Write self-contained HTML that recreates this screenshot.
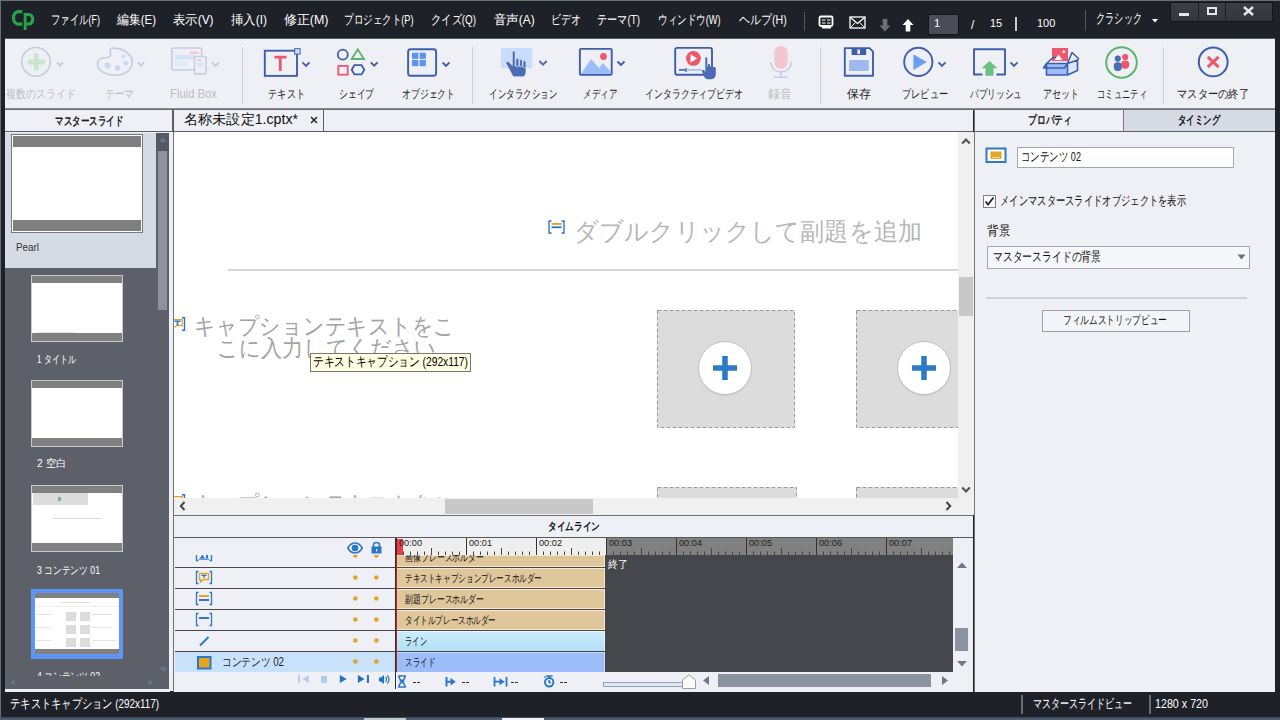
<!DOCTYPE html>
<html><head><meta charset="utf-8">
<style>
*{margin:0;padding:0;box-sizing:border-box}
html,body{width:1280px;height:720px;overflow:hidden;background:#1f2128;font-family:"Liberation Sans",sans-serif;font-size:12px;color:#222}
.a{position:absolute}
.t{position:absolute;white-space:nowrap;line-height:1}
/* title bar */
#title{left:0;top:0;width:1280px;height:38px;background:#1f2128;border-top:1px solid #6b6e75;border-left:1px solid #6b6e75}
.menu{color:#fff;font-size:12.5px;top:13px}
/* toolbar */
#tb{left:5px;top:38px;width:1270px;height:71px;background:#eff0f5;border-top:1px solid #5a5c63;border-bottom:1px solid #8a8c92}
.lbl{font-size:12px;color:#222;top:50px;text-align:center}
.dis{color:#b9bcc4}
.sep{position:absolute;top:8px;width:1px;height:57px;background:#cfd1d8}
/* left panel */
#lp{left:5px;top:109px;width:165px;height:581px;background:#5d6069}
.phdr{background:#eef0f6;border-bottom:1px solid #5c5e64;height:22px;font-size:12px;font-weight:bold;text-align:center;line-height:22px}
/* canvas */
#cv{left:174px;top:109px;width:799px;height:407px;background:#fff}
/* timeline */
#tl{left:174px;top:515px;width:799px;height:177px;background:#eff0f5;border-top:1px solid #707278}
/* right panel */
#rp{left:975px;top:109px;width:300px;height:583px;background:#eff0f5}
/* status */
#sb{left:0;top:692px;width:1280px;height:28px;background:#1f2128}
</style></head>
<body>
<div id="title" class="a">
<svg class="a" style="left:0;top:-0.7px" width="40" height="36" viewBox="0 0 40 36"><path d="M21.25 10H17.5A6.7 7.9 0 0 0 17.5 25.8H21.25V22.6H17.6A3.6 4.7 0 0 1 17.6 13.2H21.25Z" fill="#27a24d"/><rect x="22.7" y="12.9" width="2.9" height="17.1" fill="#27a24d"/><path d="M24 12.9H28A5.3 6.3 0 0 1 28 25.5H24V22.4H28A2.4 3.3 0 0 0 28 15.9H24Z" fill="#27a24d"/></svg>
<div class="t menu" style="left:50px;--w:49px">ファイル(F)</div>
<div class="t menu" style="left:116px;--w:39px">編集(E)</div>
<div class="t menu" style="left:172px;--w:40.5px">表示(V)</div>
<div class="t menu" style="left:230px;--w:36px">挿入(I)</div>
<div class="t menu" style="left:283px;--w:44.5px">修正(M)</div>
<div class="t menu" style="left:343px;--w:69.5px">プロジェクト(P)</div>
<div class="t menu" style="left:430px;--w:45px">クイズ(Q)</div>
<div class="t menu" style="left:493px;--w:40.7px">音声(A)</div>
<div class="t menu" style="left:550px;--w:29.7px">ビデオ</div>
<div class="t menu" style="left:596px;--w:43px">テーマ(T)</div>
<div class="t menu" style="left:657px;--w:62.5px">ウィンドウ(W)</div>
<div class="t menu" style="left:738px;--w:47.7px">ヘルプ(H)</div>
<div class="a" style="left:803px;top:11px;width:1px;height:19px;background:#555860"></div>
<svg class="a" style="left:817px;top:14px" width="17" height="15" viewBox="0 0 17 15"><rect x="1.5" y="1.5" width="13" height="9.5" rx="1.5" fill="none" stroke="#fff" stroke-width="1.8"/><path d="M4 5H7.5M9 5H12.5M4 8H7.5M9 8H12.5" stroke="#fff" stroke-width="1.2"/><rect x="4" y="11" width="9" height="2.5" fill="#fff"/></svg>
<svg class="a" style="left:848px;top:15px" width="17" height="13" viewBox="0 0 17 13"><rect x="1" y="1" width="15" height="11" fill="none" stroke="#fff" stroke-width="1.3"/><path d="M1 1.3L8.5 7.5L16 1.3" fill="none" stroke="#fff" stroke-width="1.3"/><path d="M1.3 11.8L6.3 6.5M15.7 11.8L10.7 6.5" stroke="#fff" stroke-width="1"/></svg>
<svg class="a" style="left:878px;top:18px" width="12" height="13" viewBox="0 0 12 13"><path d="M3.7 0H8.3V6.5H11.5L6 12.5L0.5 6.5H3.7Z" fill="#6c6f76"/></svg>
<svg class="a" style="left:901px;top:18px" width="12" height="13" viewBox="0 0 12 13"><path d="M3.7 12.5H8.3V6H11.5L6 0L0.5 6H3.7Z" fill="#fff"/></svg>
<div class="a" style="left:927px;top:13px;width:31px;height:21px;background:#4a4d57;border:1px solid #15161a"></div>
<div class="t" style="left:933px;top:17px;color:#fff;font-size:11px">1</div>
<div class="t" style="left:970px;top:18px;color:#fff;font-size:12px">/</div>
<div class="t" style="left:989px;top:17px;color:#fff;font-size:11px">15</div>
<div class="a" style="left:1014px;top:16px;width:2px;height:14px;background:#c8c9cc"></div>
<div class="t" style="left:1036px;top:17px;color:#fff;font-size:11px">100</div>
<div class="a" style="left:1084px;top:9px;width:1px;height:21px;background:#555860"></div>
<div class="t" style="left:1095px;top:10px;color:#fff;font-size:14px;--w:46px">クラシック</div>
<svg class="a" style="left:1151px;top:18px" width="6" height="4" viewBox="0 0 6 4"><path d="M0 0H6L3 3.5Z" fill="#fff"/></svg>
<div class="a" style="left:1169px;top:1px;width:103px;height:20px;background:linear-gradient(#3b3e47,#33363e);border:1px solid #15161a;border-radius:0 0 2px 2px"></div>
<div class="a" style="left:1197px;top:2px;width:1px;height:17px;background:#1c1d22"></div>
<div class="a" style="left:1224px;top:2px;width:1px;height:17px;background:#1c1d22"></div>
<div class="a" style="left:1178px;top:12px;width:10px;height:3px;background:#e6e7ea"></div>
<div class="a" style="left:1206px;top:6px;width:10px;height:8px;border:2px solid #e6e7ea"></div>
<svg class="a" style="left:1242px;top:5px" width="11" height="10" viewBox="0 0 11 10"><path d="M1 1 L10 9 M10 1 L1 9" stroke="#e6e7ea" stroke-width="2.4"/></svg>
</div>
<div id="tb" class="a">
<div class="sep" style="left:237px"></div>
<div class="sep" style="left:467px"></div>
<div class="sep" style="left:815px"></div>
<div class="sep" style="left:1158px"></div>
</div>
<svg class="a" style="left:0;top:0" width="1280" height="110" viewBox="0 0 1280 110">
<g fill="none" stroke-linecap="butt">
<!-- multi slide -->
<circle cx="36" cy="61.8" r="14.3" stroke="#c3cde2" stroke-width="1.6"/>
<path d="M36.3 53.4V70.6M27.7 62H44.9" stroke="#c9e4d0" stroke-width="5"/>
<path d="M57 62.5L60 65.5L63 62.5" stroke="#c3cde2" stroke-width="1.8"/>
<!-- theme palette -->
<path d="M112 48.2C121 47.5 132 53 132.2 62C132.4 71 123 75.6 114 75.2C104 74.8 97.5 70 97.5 64C97.5 59 102 57.5 105 57.8C109 58 111 57 110.5 53C110.2 50 110 48.4 112 48.2Z" stroke="#c3cde2" stroke-width="1.6"/>
<circle cx="107.5" cy="65.5" r="3" fill="#c6d6f6"/><circle cx="117.5" cy="68" r="2.8" fill="#c6d6f6"/><circle cx="125.7" cy="63.2" r="2.2" fill="#c6d6f6"/><circle cx="123.5" cy="56.3" r="1.8" fill="#c6d6f6"/>
<path d="M138 62.5L141 65.5L144 62.5" stroke="#c3cde2" stroke-width="1.8"/>
<!-- fluid box -->
<rect x="171.9" y="48" width="29.8" height="22" rx="1.5" stroke="#c3cde2" stroke-width="1.6"/>
<rect x="190" y="51.5" width="8.5" height="2.5" fill="#f1c7cf"/>
<rect x="175" y="55" width="20" height="4.5" fill="#d6e2f8"/>
<rect x="175" y="61" width="6" height="5" fill="#e1e8f6"/><rect x="182" y="61" width="6" height="5" fill="#e1e8f6"/>
<rect x="194.5" y="56.5" width="11.6" height="17.4" rx="1.5" fill="#eff0f5" stroke="#c3cde2" stroke-width="1.6"/>
<rect x="197.5" y="59" width="4" height="2" fill="#f1c7cf"/><rect x="197" y="62.5" width="6" height="4" fill="#d6e2f8"/>
<path d="M212 62.5L215.5 66L219 62.5" stroke="#c3cde2" stroke-width="1.8"/>
<!-- text -->
<rect x="264.8" y="50.7" width="32.2" height="25.2" stroke="#3d5fab" stroke-width="1.9"/>
<path d="M274.4 57.2H286.6M280.3 57.2V70.9" stroke="#ee576d" stroke-width="2.8"/>
<rect x="294.7" y="48.7" width="5.4" height="5.4" fill="#c9e2f9" stroke="#3d5fab" stroke-width="1"/>
<path d="M302.5 62.3L306 65.8L309.5 62.3" stroke="#3d5fab" stroke-width="1.9"/>
<!-- shape -->
<circle cx="342.8" cy="54.7" r="5" stroke="#3d5fab" stroke-width="1.8"/>
<path d="M357.8 49.5L364 59H351.6Z" stroke="#5ab46c" stroke-width="1.8" stroke-linejoin="miter"/>
<rect x="338.3" y="65.9" width="9.4" height="8.8" stroke="#ee576d" stroke-width="1.8"/>
<path d="M354.4 65.2H361.6L364.3 69.8L361.6 74.4H354.4L351.7 69.8Z" stroke="#3d5fab" stroke-width="1.8"/>
<path d="M370.8 62.3L374.2 65.7L377.6 62.3" stroke="#3d5fab" stroke-width="1.9"/>
<!-- object -->
<rect x="408.1" y="49.2" width="28" height="26.6" rx="2.5" stroke="#3d5fab" stroke-width="1.9"/>
<rect x="412" y="52.7" width="6.3" height="6.2" fill="#5c94f6"/><rect x="419.6" y="52.7" width="6.3" height="6.2" fill="#5c94f6"/>
<rect x="412" y="60" width="6.3" height="6.2" fill="#5c94f6"/><rect x="419.6" y="60" width="6.3" height="6.2" fill="#5c94f6"/>
<path d="M442.6 62.5L446 65.9L449.4 62.5" stroke="#3d5fab" stroke-width="1.9"/>
<!-- interaction -->
<rect x="501" y="48" width="31.2" height="20.3" rx="1.2" fill="#c9dcfb"/>
<g fill="#4a6cb4" stroke="#eef3fd" stroke-width="0.6">
<path d="M506.8 61.8C507.5 61.3 508.5 61.5 509.3 62.3L512.3 65.5V52C512.3 50.5 515.1 50.5 515.1 52V66H526V71C526 74.5 524.5 76.8 522.5 76.8H514.5C513 76.8 512.5 75.5 512 74.5L506.2 63.8C505.8 63 506 62.3 506.8 61.8Z"/>
<rect x="515.8" y="58.6" width="3" height="8" rx="1.2"/>
<rect x="519.6" y="59.6" width="2.9" height="7" rx="1.2"/>
<rect x="523" y="60.8" width="3" height="7" rx="1.2"/>
</g>
<path d="M539.3 61L543 64.7L546.7 61" stroke="#4a6cb4" stroke-width="1.9"/>
<!-- media -->
<rect x="579.9" y="48.9" width="31.8" height="25.9" rx="1" stroke="#3d5fab" stroke-width="1.9"/>
<path d="M581 74L591 59L599 68L603 63L611 72V74Z" fill="#9cbdf9"/>
<circle cx="603.5" cy="56.5" r="3.4" fill="#ee576d"/>
<path d="M617.5 61.5L621 65L624.5 61.5" stroke="#3d5fab" stroke-width="1.9"/>
<!-- interactive video -->
<rect x="675.2" y="47.9" width="36.8" height="26.9" rx="2" stroke="#3d5fab" stroke-width="1.9"/>
<circle cx="693.4" cy="58.4" r="7.4" fill="#ee576d"/>
<path d="M690.5 54.3V62.5L697.3 58.4Z" fill="#fff"/>
<path d="M679 69.9H685" stroke="#3d5fab" stroke-width="1.6"/><path d="M686 68V72" stroke="#3d5fab" stroke-width="1.4"/>
<path d="M687 69.9H702" stroke="#8fb4f6" stroke-width="1.4"/>
<path d="M705.3 58.3C705.3 57 707.3 57 707.3 58.3V66.5H708V64.5C708 63.6 710 63.6 710 64.5V66.5H710.6C710.6 65.6 712.4 65.6 712.4 66.5V67.5C712.4 66.8 715.8 66.6 715.8 68V74C715.8 77 714 79.2 711.5 79.2H707.5C706 79.2 705 78 704 76.5L702 71.5C701.5 70.5 703.5 69.5 704.3 70.6L705.3 72Z" fill="#4a6cb4"/>
<!-- mic -->
<rect x="774.2" y="45.8" width="13.6" height="23" rx="6.8" fill="#f3c7d0"/>
<path d="M770.8 62C770.8 68 775.5 72 781 72C786.5 72 791.3 68 791.3 62M781 72V77M774 77.2H788" stroke="#c2cee6" stroke-width="1.6"/>
<!-- save -->
<path d="M844.8 48.1H869.5L873 51.6V75.7H844.8Z" stroke="#3d5fab" stroke-width="1.9" stroke-linejoin="round"/>
<rect x="851.6" y="48" width="14.6" height="7" fill="#3d5fab"/><rect x="857.4" y="49.5" width="2.6" height="4.5" fill="#eff0f5"/>
<rect x="849.1" y="60.1" width="19.7" height="10.8" rx="0.8" fill="#9db9f0"/>
<!-- preview -->
<circle cx="918.3" cy="61.9" r="14.1" stroke="#3d5fab" stroke-width="1.9"/>
<path d="M913.4 54.2V69.9L926.7 62Z" fill="#6c9df5"/>
<path d="M938.5 62.3L942 65.8L945.5 62.3" stroke="#3d5fab" stroke-width="1.9"/>
<!-- publish -->
<path d="M982.5 74.5H974V49.2H1005V74.5H996.5" stroke="#3d5fab" stroke-width="1.9" stroke-linejoin="round"/>
<path d="M989.5 61L997.5 68.3H993.5V75.8H985.5V68.3H981.5Z" fill="#6cc07e"/>
<path d="M1010.5 62.3L1014 65.8L1017.5 62.3" stroke="#3d5fab" stroke-width="1.9"/>
<!-- asset -->
<rect x="1052" y="48" width="16" height="13" fill="#ee576d"/>
<path d="M1054.5 60L1058.5 54.5L1062.5 60Z" fill="#fff"/><circle cx="1063.8" cy="51.8" r="1.4" fill="#fff"/>
<path d="M1046.5 63.5H1067.5V75H1046.5Z" fill="#9cbdf9"/>
<path d="M1067.5 63.5L1077.5 60V70.5L1067.5 75Z" fill="#dce6fb"/>
<path d="M1046.5 63.5V75H1067.5V63.5H1046.5L1043.5 68H1064.5L1067.5 63.5L1077.5 60V70.5L1067.5 75M1046.5 63.5L1053 57.5H1056M1067.5 63.5L1072 52.5L1078.5 58.5L1077.5 60" fill="none" stroke="#3d5fab" stroke-width="1.6" stroke-linejoin="round"/>
<!-- community -->
<circle cx="1121.5" cy="62.5" r="15.3" stroke="#5bb56d" stroke-width="2"/>
<circle cx="1125.2" cy="57" r="3.1" fill="#ee576d"/><rect x="1121.2" y="60.4" width="8" height="8.3" rx="3.6" fill="#ee576d"/>
<circle cx="1117.8" cy="58.6" r="3.1" fill="#4a6cb4"/><rect x="1113.8" y="62.3" width="8" height="8.6" rx="3.6" fill="#4a6cb4"/>
<!-- exit -->
<circle cx="1213.2" cy="61.9" r="14.4" stroke="#3d5fab" stroke-width="2"/>
<path d="M1207.7 56.8L1218.6 67.1M1218.6 56.8L1207.7 67.1" stroke="#ee576d" stroke-width="3"/>
</g>
</svg>
<div class="t lbl dis" style="left:6px;top:88px;--w:70px">複数のスライド</div>
<div class="t lbl dis" style="left:105px;top:88px;--w:29px">テーマ</div>
<div class="t lbl dis" style="left:170px;top:88px;--w:47px;font-size:12.5px">Fluid Box</div>
<div class="t lbl" style="left:268px;top:88px;--w:37px">テキスト</div>
<div class="t lbl" style="left:339px;top:88px;--w:35px">シェイプ</div>
<div class="t lbl" style="left:402px;top:88px;--w:53px">オブジェクト</div>
<div class="t lbl" style="left:489px;top:88px;--w:68px">インタラクション</div>
<div class="t lbl" style="left:583px;top:88px;--w:34px">メディア</div>
<div class="t lbl" style="left:645px;top:88px;--w:98px">インタラクティブビデオ</div>
<div class="t lbl dis" style="left:768px;top:88px;--w:24px">録音</div>
<div class="t lbl" style="left:847px;top:88px;--w:24px">保存</div>
<div class="t lbl" style="left:902px;top:88px;--w:46px">プレビュー</div>
<div class="t lbl" style="left:970px;top:88px;--w:52px">パブリッシュ</div>
<div class="t lbl" style="left:1043px;top:88px;--w:36px">アセット</div>
<div class="t lbl" style="left:1097px;top:88px;--w:50px">コミュニティ</div>
<div class="t lbl" style="left:1177px;top:88px;--w:72px">マスターの終了</div>

<div id="lp" class="a">
<div class="a phdr" style="left:0;top:0;width:168px;height:23px;line-height:23px;border-right:1px solid #5c5e64"></div>
<div class="a" style="left:0;top:23px;width:164px;height:1px;background:#eef0f6"></div><div class="a" style="left:0;top:24px;width:151px;height:135px;background:#d5dae5"></div>
</div>
<div class="t" style="left:55px;top:115px;font-weight:bold;font-size:12px;color:#1a1a1a;--w:68px">マスタースライド</div>
<div class="a" style="left:11px;top:134px;width:132px;height:99px;background:#fff;border:1px solid #7a7a7a;padding:1px">
<div style="position:absolute;left:1px;top:1px;right:1px;height:10.5px;background:#808080"></div>
<div style="position:absolute;left:1px;bottom:1px;right:1px;height:11px;background:#808080"></div></div>
<div class="t" style="left:16px;top:242px;font-size:11px;color:#333;--w:23px">Pearl</div>
<div class="a" style="left:31px;top:275px;width:92px;height:67px;background:#fff;border:1px solid #c9c9c9">
<div class="a" style="left:0;top:0;width:100%;height:7px;background:#808080"></div>
<div class="a" style="left:0;bottom:0;width:100%;height:8px;background:#808080"></div><div class="a" style="left:4px;top:56px;width:40px;height:1px;background:#e4e4e4"></div></div>
<div class="t" style="left:37px;top:354px;font-size:11px;color:#fff;--w:39px">1 タイトル</div>
<div class="a" style="left:31px;top:380px;width:92px;height:67px;background:#fff;border:1px solid #c9c9c9">
<div class="a" style="left:0;top:0;width:100%;height:7px;background:#808080"></div>
<div class="a" style="left:0;bottom:0;width:100%;height:8px;background:#808080"></div></div>
<div class="t" style="left:37px;top:458px;font-size:11px;color:#fff;--w:29px">2 空白</div>
<div class="a" style="left:31px;top:485px;width:92px;height:67px;background:#fff;border:1px solid #c9c9c9">
<div class="a" style="left:0;top:0;width:100%;height:7px;background:#808080"></div>
<div class="a" style="left:0;bottom:0;width:100%;height:8px;background:#808080"></div><div class="a" style="left:1px;top:7px;width:55px;height:12px;background:#dcdcdc"></div><div class="a" style="left:26px;top:11px;width:3px;height:4px;background:#8aa"></div><div class="a" style="left:20px;top:32px;width:50px;height:1px;background:#ddd"></div></div>
<div class="t" style="left:37px;top:565px;font-size:11px;color:#fff;--w:63px">3 コンテンツ 01</div>
<div class="a" style="left:31px;top:589px;width:92px;height:70px;background:#5f95f5"></div>
<div class="a" style="left:35px;top:593px;width:84px;height:61px;background:#fff">
<div class="a" style="left:0;top:0;width:100%;height:5px;background:#808080"></div>
<div class="a" style="left:0;bottom:0;width:100%;height:5px;background:#808080"></div>
<div class="a" style="left:25px;top:9px;width:30px;height:1px;background:#ddd"></div>
<div class="a" style="left:0;top:13px;width:84px;height:1px;background:#eee"></div>
<div class="a" style="left:31px;top:19px;width:10px;height:9px;background:#dcdcdc"></div><div class="a" style="left:45px;top:19px;width:10px;height:9px;background:#dcdcdc"></div>
<div class="a" style="left:31px;top:32px;width:10px;height:9px;background:#dcdcdc"></div><div class="a" style="left:45px;top:32px;width:10px;height:9px;background:#dcdcdc"></div>
<div class="a" style="left:31px;top:45px;width:10px;height:9px;background:#dcdcdc"></div><div class="a" style="left:45px;top:45px;width:10px;height:9px;background:#dcdcdc"></div>
<div class="a" style="left:1px;top:21px;width:15px;height:1px;background:#e2e2e2"></div><div class="a" style="left:1px;top:34px;width:15px;height:1px;background:#e2e2e2"></div><div class="a" style="left:1px;top:47px;width:15px;height:1px;background:#e2e2e2"></div>
<div class="a" style="left:57px;top:21px;width:20px;height:1px;background:#e2e2e2"></div><div class="a" style="left:57px;top:34px;width:20px;height:1px;background:#e2e2e2"></div><div class="a" style="left:57px;top:47px;width:25px;height:1px;background:#e2e2e2"></div>
</div>
<div class="a" style="left:5px;top:669px;width:151px;height:7px;overflow:hidden"><div class="t" style="left:32px;top:2px;font-size:11px;color:#fff;--w:63px">4 コンテンツ 02</div></div>
<!-- left scrollbar -->
<div class="a" style="left:156px;top:133px;width:13px;height:556px;background:#5d6069"></div><div class="a" style="left:156px;top:133px;width:13px;height:18px;background:#565962"></div>
<svg class="a" style="left:158px;top:137px" width="10" height="6"><path d="M1 5L5 0.8L9 5Z" fill="#6b7592"/></svg>
<div class="a" style="left:158px;top:151px;width:9px;height:159px;background:#8d929e"></div>
<svg class="a" style="left:159px;top:667px" width="9" height="6"><path d="M0.5 0.5H8.5L4.5 5Z" fill="#6b7592"/></svg>
<svg class="a" style="left:10px;top:679px" width="5" height="7"><path d="M4.5 0V7L0.5 3.5Z" fill="#6b7592"/></svg>
<svg class="a" style="left:148px;top:679px" width="5" height="7"><path d="M0.5 0V7L4.5 3.5Z" fill="#6b7592"/></svg>
<div class="a" style="left:5px;top:689px;width:165px;height:3px;background:#eef0f6"></div>
<div class="a" style="left:169px;top:132px;width:4px;height:559px;background:#eef0f6"></div>

<div id="cv" class="a" style="background:#eef0f6">
<div class="a" style="left:0;top:22px;width:799px;height:1px;background:#5c5e64"></div>
<div class="a" style="left:0;top:23px;width:784px;height:366px;background:#fff;overflow:hidden">
<svg class="a" style="left:374px;top:88px" width="17" height="14" viewBox="0 0 17 14"><path d="M3.5 1H1V13H3.5M13.5 1H16V13H13.5" fill="none" stroke="#2a78c8" stroke-width="1.4"/><rect x="3.5" y="3" width="10" height="1.9" fill="#e5a21c"/><rect x="3.5" y="6.3" width="10" height="1.9" fill="#2a78c8"/></svg>
<div class="t" style="left:400px;top:87px;font-size:25px;color:#b7b7b7;--w:348px">ダブルクリックして副題を追加</div>
<div class="a" style="left:54px;top:137px;width:730px;height:2px;background:#d6d6d6"></div>
<svg class="a" style="left:-1px;top:185px" width="13" height="14" viewBox="0 0 13 14"><path d="M9 0.7H11.5V13.3H9" fill="none" stroke="#2a78c8" stroke-width="1.4"/><path d="M0.5 2.6H9.2V8.6H3.5L1.5 10.5" fill="none" stroke="#e5a21c" stroke-width="1.2"/><path d="M1.5 4.2H7.5M4.5 4.2V7.5M3.5 7.5H5.5" stroke="#2a78c8" stroke-width="1.6"/></svg>
<div class="t" style="left:20px;top:183px;font-size:23px;color:#a3a3a3;--w:261px">キャプションテキストをこ</div>
<div class="t" style="left:43px;top:205px;font-size:23px;color:#a3a3a3;--w:219px">こに入力してください</div>
<svg class="a" style="left:483px;top:178px" width="138" height="118"><rect x="0.5" y="0.5" width="137" height="117" fill="#dcdcdc" stroke="#9898aa" stroke-width="1" stroke-dasharray="4 2"/></svg>
<svg class="a" style="left:682px;top:178px" width="138" height="118"><rect x="0.5" y="0.5" width="137" height="117" fill="#dcdcdc" stroke="#9898aa" stroke-width="1" stroke-dasharray="4 2"/></svg>
<div class="a" style="left:524px;top:209px;width:54px;height:54px;border-radius:50%;background:#fff;border:1px solid #c2c2c2;box-shadow:0 1px 1px rgba(0,0,0,0.08)"></div>
<div class="a" style="left:723px;top:209px;width:54px;height:54px;border-radius:50%;background:#fff;border:1px solid #c2c2c2;box-shadow:0 1px 1px rgba(0,0,0,0.08)"></div>
<svg class="a" style="left:538px;top:223px" width="26" height="26"><path d="M13 1V25M1 13H25" stroke="#2a7ac5" stroke-width="5.5"/></svg>
<svg class="a" style="left:737px;top:223px" width="26" height="26"><path d="M13 1V25M1 13H25" stroke="#2a7ac5" stroke-width="5.5"/></svg>
<svg class="a" style="left:483px;top:355px" width="140" height="20"><rect x="0.5" y="0.5" width="139" height="19" fill="#dcdcdc" stroke="#9898aa" stroke-width="1" stroke-dasharray="4 2"/></svg>
<svg class="a" style="left:682px;top:355px" width="140" height="20"><rect x="0.5" y="0.5" width="139" height="19" fill="#dcdcdc" stroke="#9898aa" stroke-width="1" stroke-dasharray="4 2"/></svg>
<div class="t" style="left:20px;top:361px;font-size:23px;color:#a3a3a3;--w:261px">キャプションテキストをこ</div>
<svg class="a" style="left:-1px;top:362px" width="13" height="14" viewBox="0 0 13 14"><path d="M9 0.7H11.5V13.3H9" fill="none" stroke="#2a78c8" stroke-width="1.4"/><path d="M0.5 2.6H9.2V8.6" fill="none" stroke="#e5a21c" stroke-width="1.2"/></svg>
</div>
<!-- tooltip -->
<div class="a" style="left:136px;top:244px;width:161px;height:19px;background:#ffffe1;border:1px solid #767676"></div>
<div class="t" style="left:139px;top:247px;font-size:12.5px;color:#000;--w:155px">テキストキャプション (292x117)</div>
<!-- v scrollbar -->
<div class="a" style="left:784px;top:23px;width:16px;height:366px;background:#f0f0f0"></div>
<svg class="a" style="left:787px;top:28px" width="10" height="8"><path d="M1.2 6.5L5 2.5L8.8 6.5" fill="none" stroke="#555" stroke-width="2.2"/></svg>
<div class="a" style="left:785px;top:168px;width:14px;height:39px;background:#c8c8c8"></div>
<svg class="a" style="left:787px;top:377px" width="10" height="8"><path d="M1.2 1.5L5 5.5L8.8 1.5" fill="none" stroke="#555" stroke-width="2.2"/></svg>
<!-- h scrollbar -->
<div class="a" style="left:0;top:389px;width:784px;height:17px;background:#f0f0f0"></div>
<div class="a" style="left:271px;top:390px;width:148px;height:15px;background:#c8c8c8"></div>
<svg class="a" style="left:5px;top:392px" width="7" height="10"><path d="M5.5 1L1.8 5L5.5 9" fill="none" stroke="#444" stroke-width="2"/></svg>
<svg class="a" style="left:771px;top:392px" width="7" height="10"><path d="M1.5 1L5.2 5L1.5 9" fill="none" stroke="#444" stroke-width="2"/></svg>
<div class="a" style="left:784px;top:389px;width:16px;height:17px;background:#f0f0f0"></div>
<div class="a" style="left:0;top:406px;width:799px;height:1px;background:#5c5e64"></div>
</div>
<div class="a" style="left:173px;top:109px;width:1px;height:583px;background:#6f7176"></div>
<div class="a" style="left:173px;top:109px;width:151px;height:23px;border-left:1px solid #5c5e64;border-right:1px solid #5c5e64;border-bottom:1px solid #5c5e64;background:#eef0f6"></div>
<div class="t" style="left:184px;top:112px;font-size:14px;color:#111;--w:114px">名称未設定1.cptx*</div>
<svg class="a" style="left:310px;top:116px" width="8" height="8"><path d="M1 1L7 7M7 1L1 7" stroke="#222" stroke-width="1.5"/></svg>

<div id="tl" class="a">
<div class="a" style="left:0;top:0;width:799px;height:22px;background:#eef0f6;border-bottom:1px solid #55575d"></div>
</div>
<div class="t" style="left:548px;top:520.5px;font-size:10.5px;font-weight:bold;color:#111;--w:52px">タイムライン</div>
<div class="a" style="left:606px;top:538px;width:347px;height:17px;background:#808080"></div>
<div class="a" style="left:605px;top:555px;width:348px;height:117px;background:#46474c"></div>
<div class="a" style="left:175px;top:652px;width:221px;height:20px;background:#c7e2fa"></div>
<div class="a" style="left:397px;top:555px;width:208px;box-shadow:inset -1px 0 #f6e8cc,inset 0 1px #f6e8cc,inset 0 -1px #f6e8cc;height:12px;background:#dfc69b"></div>
<div class="t" style="left:405px;top:552px;font-size:11px;color:#111;--w:79px">画像プレースホルダー</div>
<div class="a" style="left:397px;top:568px;width:208px;box-shadow:inset -1px 0 #f6e8cc,inset 0 1px #f6e8cc,inset 0 -1px #f6e8cc;height:20px;background:#dfc69b"></div>
<div class="t" style="left:405px;top:573px;font-size:11px;color:#111;--w:137px">テキストキャプションプレースホルダー</div>
<div class="a" style="left:397px;top:589px;width:208px;box-shadow:inset -1px 0 #f6e8cc,inset 0 1px #f6e8cc,inset 0 -1px #f6e8cc;height:20px;background:#dfc69b"></div>
<div class="t" style="left:405px;top:594px;font-size:11px;color:#111;--w:79px">副題プレースホルダー</div>
<div class="a" style="left:397px;top:610px;width:208px;box-shadow:inset -1px 0 #f6e8cc,inset 0 1px #f6e8cc,inset 0 -1px #f6e8cc;height:20px;background:#dfc69b"></div>
<div class="t" style="left:405px;top:615px;font-size:11px;color:#111;--w:91px">タイトルプレースホルダー</div>
<div class="a" style="left:397px;top:631px;width:208px;box-shadow:inset -1px 0 #f6e8cc,inset 0 1px #f6e8cc,inset 0 -1px #f6e8cc;height:20px;background:linear-gradient(#ccedfb,#b3dff6);box-shadow:inset -1px 0 #eaf7fd,inset 0 1px #eaf7fd"></div>
<div class="t" style="left:405px;top:636px;font-size:11px;color:#111;--w:22px">ライン</div>
<div class="a" style="left:397px;top:652px;width:208px;box-shadow:inset -1px 0 #c9dafc,inset 0 1px #c9dafc;height:20px;background:#9dbdfa"></div>
<div class="t" style="left:405px;top:657px;font-size:11px;color:#111;--w:30px">スライド</div>

<div class="a" style="left:175px;top:567px;width:430px;height:1px;background:#47474b"></div>
<div class="a" style="left:175px;top:588px;width:430px;height:1px;background:#47474b"></div>
<div class="a" style="left:175px;top:609px;width:430px;height:1px;background:#47474b"></div>
<div class="a" style="left:175px;top:630px;width:430px;height:1px;background:#47474b"></div>
<div class="a" style="left:175px;top:651px;width:430px;height:1px;background:#47474b"></div>
<svg class="a" style="left:174px;top:538px" width="222" height="134"><circle cx="181.3" cy="17.5" r="2.3" fill="#e2a32b"/><circle cx="202.39999999999998" cy="17.5" r="2.3" fill="#e2a32b"/><circle cx="181.3" cy="39.5" r="2.3" fill="#e2a32b"/><circle cx="202.39999999999998" cy="39.5" r="2.3" fill="#e2a32b"/><circle cx="181.3" cy="60.5" r="2.3" fill="#e2a32b"/><circle cx="202.39999999999998" cy="60.5" r="2.3" fill="#e2a32b"/><circle cx="181.3" cy="81.5" r="2.3" fill="#e2a32b"/><circle cx="202.39999999999998" cy="81.5" r="2.3" fill="#e2a32b"/><circle cx="181.3" cy="102.5" r="2.3" fill="#e2a32b"/><circle cx="202.39999999999998" cy="102.5" r="2.3" fill="#e2a32b"/><circle cx="181.3" cy="123.5" r="2.3" fill="#e2a32b"/><circle cx="202.39999999999998" cy="123.5" r="2.3" fill="#e2a32b"/></svg>
<svg class="a" style="left:194px;top:550px" width="20" height="125" viewBox="0 0 20 125">
<path d="M4.5 -1H2.5V10.5H4.5M15.5 -1H17.5V10.5H15.5" fill="none" stroke="#2a78c8" stroke-width="1.3"/><path d="M5.5 8.5L8.5 4.5L11 8.5Z" fill="#2a78c8"/><rect x="12" y="5" width="2" height="3.5" fill="#2a78c8"/><path d="M5 9.2H15" stroke="#2a78c8" stroke-width="1"/>
<path d="M4.5 21.5H2.5V33.5H4.5M15.5 21.5H17.5V33.5H15.5" fill="none" stroke="#2a78c8" stroke-width="1.3"/>
<path d="M5.5 23.5H14.5V29.5H9.5L6.5 32V29.5H5.5Z" fill="none" stroke="#e5a21c" stroke-width="1.3"/>
<path d="M7.5 25.3H12.5M10 25.3V28" stroke="#2a78c8" stroke-width="1.3"/>
<path d="M4.5 42.5H2.5V54.5H4.5M15.5 42.5H17.5V54.5H15.5" fill="none" stroke="#2a78c8" stroke-width="1.3"/>
<rect x="5" y="45" width="10" height="2" fill="#e5a21c"/><rect x="5" y="49" width="10" height="2" fill="#2a78c8"/>
<path d="M4.5 63.5H2.5V75.5H4.5M15.5 63.5H17.5V75.5H15.5" fill="none" stroke="#2a78c8" stroke-width="1.3"/>
<rect x="5" y="67" width="10" height="2" fill="#2a78c8"/>
<path d="M6 95.5L14.5 87" stroke="#2a78c8" stroke-width="2"/>
<rect x="4" y="107" width="12.5" height="11.5" fill="#e5a51c" stroke="#2a78c8" stroke-width="2"/>
</svg>
<div class="a" style="left:175px;top:538px;width:220px;height:17px;background:#eef0f6"></div>
<div class="a" style="left:396px;top:538px;width:210px;height:17px;background:#efefef"></div>
<svg class="a" style="left:396px;top:538px" width="557" height="17"><path d="M0.5 0V17" stroke="#333" stroke-width="1"/><path d="M7.5 13.5V17" stroke="#444" stroke-width="1"/><path d="M14.5 13.5V17" stroke="#444" stroke-width="1"/><path d="M21.5 13.5V17" stroke="#444" stroke-width="1"/><path d="M28.5 13.5V17" stroke="#444" stroke-width="1"/><path d="M35.5 10V17" stroke="#444" stroke-width="1"/><path d="M42.5 13.5V17" stroke="#444" stroke-width="1"/><path d="M49.5 13.5V17" stroke="#444" stroke-width="1"/><path d="M56.5 13.5V17" stroke="#444" stroke-width="1"/><path d="M63.5 13.5V17" stroke="#444" stroke-width="1"/><path d="M70.5 0V17" stroke="#333" stroke-width="1"/><path d="M77.5 13.5V17" stroke="#444" stroke-width="1"/><path d="M84.5 13.5V17" stroke="#444" stroke-width="1"/><path d="M91.5 13.5V17" stroke="#444" stroke-width="1"/><path d="M98.5 13.5V17" stroke="#444" stroke-width="1"/><path d="M105.5 10V17" stroke="#444" stroke-width="1"/><path d="M112.5 13.5V17" stroke="#444" stroke-width="1"/><path d="M119.5 13.5V17" stroke="#444" stroke-width="1"/><path d="M126.5 13.5V17" stroke="#444" stroke-width="1"/><path d="M133.5 13.5V17" stroke="#444" stroke-width="1"/><path d="M140.5 0V17" stroke="#333" stroke-width="1"/><path d="M147.5 13.5V17" stroke="#444" stroke-width="1"/><path d="M154.5 13.5V17" stroke="#444" stroke-width="1"/><path d="M161.5 13.5V17" stroke="#444" stroke-width="1"/><path d="M168.5 13.5V17" stroke="#444" stroke-width="1"/><path d="M175.5 10V17" stroke="#444" stroke-width="1"/><path d="M182.5 13.5V17" stroke="#444" stroke-width="1"/><path d="M189.5 13.5V17" stroke="#444" stroke-width="1"/><path d="M196.5 13.5V17" stroke="#444" stroke-width="1"/><path d="M203.5 13.5V17" stroke="#444" stroke-width="1"/><path d="M210.5 0V17" stroke="#333" stroke-width="1"/><path d="M217.5 13.5V17" stroke="#444" stroke-width="1"/><path d="M224.5 13.5V17" stroke="#444" stroke-width="1"/><path d="M231.5 13.5V17" stroke="#444" stroke-width="1"/><path d="M238.5 13.5V17" stroke="#444" stroke-width="1"/><path d="M245.5 10V17" stroke="#444" stroke-width="1"/><path d="M252.5 13.5V17" stroke="#444" stroke-width="1"/><path d="M259.5 13.5V17" stroke="#444" stroke-width="1"/><path d="M266.5 13.5V17" stroke="#444" stroke-width="1"/><path d="M273.5 13.5V17" stroke="#444" stroke-width="1"/><path d="M280.5 0V17" stroke="#333" stroke-width="1"/><path d="M287.5 13.5V17" stroke="#444" stroke-width="1"/><path d="M294.5 13.5V17" stroke="#444" stroke-width="1"/><path d="M301.5 13.5V17" stroke="#444" stroke-width="1"/><path d="M308.5 13.5V17" stroke="#444" stroke-width="1"/><path d="M315.5 10V17" stroke="#444" stroke-width="1"/><path d="M322.5 13.5V17" stroke="#444" stroke-width="1"/><path d="M329.5 13.5V17" stroke="#444" stroke-width="1"/><path d="M336.5 13.5V17" stroke="#444" stroke-width="1"/><path d="M343.5 13.5V17" stroke="#444" stroke-width="1"/><path d="M350.5 0V17" stroke="#333" stroke-width="1"/><path d="M357.5 13.5V17" stroke="#444" stroke-width="1"/><path d="M364.5 13.5V17" stroke="#444" stroke-width="1"/><path d="M371.5 13.5V17" stroke="#444" stroke-width="1"/><path d="M378.5 13.5V17" stroke="#444" stroke-width="1"/><path d="M385.5 10V17" stroke="#444" stroke-width="1"/><path d="M392.5 13.5V17" stroke="#444" stroke-width="1"/><path d="M399.5 13.5V17" stroke="#444" stroke-width="1"/><path d="M406.5 13.5V17" stroke="#444" stroke-width="1"/><path d="M413.5 13.5V17" stroke="#444" stroke-width="1"/><path d="M420.5 0V17" stroke="#333" stroke-width="1"/><path d="M427.5 13.5V17" stroke="#444" stroke-width="1"/><path d="M434.5 13.5V17" stroke="#444" stroke-width="1"/><path d="M441.5 13.5V17" stroke="#444" stroke-width="1"/><path d="M448.5 13.5V17" stroke="#444" stroke-width="1"/><path d="M455.5 10V17" stroke="#444" stroke-width="1"/><path d="M462.5 13.5V17" stroke="#444" stroke-width="1"/><path d="M469.5 13.5V17" stroke="#444" stroke-width="1"/><path d="M476.5 13.5V17" stroke="#444" stroke-width="1"/><path d="M483.5 13.5V17" stroke="#444" stroke-width="1"/><path d="M490.5 0V17" stroke="#333" stroke-width="1"/><path d="M497.5 13.5V17" stroke="#444" stroke-width="1"/><path d="M504.5 13.5V17" stroke="#444" stroke-width="1"/><path d="M511.5 13.5V17" stroke="#444" stroke-width="1"/><path d="M518.5 13.5V17" stroke="#444" stroke-width="1"/><path d="M525.5 10V17" stroke="#444" stroke-width="1"/><path d="M532.5 13.5V17" stroke="#444" stroke-width="1"/><path d="M539.5 13.5V17" stroke="#444" stroke-width="1"/><path d="M546.5 13.5V17" stroke="#444" stroke-width="1"/><path d="M553.5 13.5V17" stroke="#444" stroke-width="1"/></svg>
<div class="a" style="left:397px;top:539px;width:6px;height:16px;background:#ee3b45"></div>
<div class="t" style="left:399px;top:539px;font-size:9px;font-family:'Liberation Sans',sans-serif;color:#222;--w:23px">00:00</div><div class="t" style="left:469px;top:539px;font-size:9px;font-family:'Liberation Sans',sans-serif;color:#222;--w:23px">00:01</div><div class="t" style="left:539px;top:539px;font-size:9px;font-family:'Liberation Sans',sans-serif;color:#222;--w:23px">00:02</div><div class="t" style="left:609px;top:539px;font-size:9px;font-family:'Liberation Sans',sans-serif;color:#222;--w:23px">00:03</div><div class="t" style="left:679px;top:539px;font-size:9px;font-family:'Liberation Sans',sans-serif;color:#222;--w:23px">00:04</div><div class="t" style="left:749px;top:539px;font-size:9px;font-family:'Liberation Sans',sans-serif;color:#222;--w:23px">00:05</div><div class="t" style="left:819px;top:539px;font-size:9px;font-family:'Liberation Sans',sans-serif;color:#222;--w:23px">00:06</div><div class="t" style="left:889px;top:539px;font-size:9px;font-family:'Liberation Sans',sans-serif;color:#222;--w:23px">00:07</div>
<svg class="a" style="left:347px;top:542px" width="16" height="12" viewBox="0 0 16 12"><path d="M0.8 6C3 2 5.5 1 8 1C10.5 1 13 2 15.2 6C13 10 10.5 11 8 11C5.5 11 3 10 0.8 6Z" fill="none" stroke="#2a78c8" stroke-width="1.6"/><circle cx="8" cy="6" r="3.3" fill="#2a78c8"/></svg>
<svg class="a" style="left:371px;top:541px" width="11" height="13" viewBox="0 0 11 13"><path d="M2.5 6V4C2.5 0.7 8.5 0.7 8.5 4V6" fill="none" stroke="#2a78c8" stroke-width="1.6"/><rect x="0.5" y="5.5" width="10" height="7" fill="#2a78c8"/><rect x="5" y="8" width="1.2" height="2.5" fill="#fff"/></svg>
<div class="a" style="left:395px;top:538px;width:1px;height:151px;background:#2e2e30"></div>
<div class="a" style="left:396px;top:555px;width:1px;height:117px;background:#b02a2a"></div>
<div class="t" style="left:608px;top:559px;font-size:11px;color:#fff;--w:20px">終了</div>
<div class="t" style="left:222px;top:656px;font-size:12px;color:#222;--w:62px">コンテンツ 02</div>
<svg class="a" style="left:296px;top:673px" width="100" height="14" viewBox="0 0 100 14">
<rect x="2.2" y="2" width="1.8" height="8" fill="#b1cde7"/><path d="M12.9 2V10L6.7 6Z" fill="#b1cde7"/>
<rect x="25" y="3" width="6" height="7" fill="#b1cde7"/>
<path d="M43.8 2V10L50.7 6Z" fill="#2173c2"/>
<path d="M61.9 2V10L68.6 6Z" fill="#2173c2"/><rect x="70.9" y="2" width="2" height="8" fill="#2173c2"/>
<path d="M83 4.5H85L88 2V11L85 8.5H83Z" fill="#2173c2"/><path d="M89.5 4C90.8 5.3 90.8 7.7 89.5 9M91.3 2.5C93.5 4.5 93.5 8.5 91.3 10.5" fill="none" stroke="#2173c2" stroke-width="1.2"/>
</svg>
<svg class="a" style="left:396px;top:673px" width="180" height="16" viewBox="0 0 180 16">
<path d="M2 3H10M2 14H10M3 3.5C3 7 6 7.5 6 8.5C6 9.5 3 10 3 13.5M9 3.5C9 7 6 7.5 6 8.5C6 9.5 9 10 9 13.5" fill="none" stroke="#2a78c8" stroke-width="1.6"/>
<path d="M3 8C4.5 6.5 7.5 6.5 9 8L6 10Z" fill="#2a78c8"/>
<path d="M17 9.5H20M21 9.5H24" stroke="#333" stroke-width="1"/>
<path d="M50.5 4V13.5M50.5 8.7H55.5" stroke="#2a78c8" stroke-width="2" fill="none"/><path d="M54.5 5L59.8 8.7L54.5 12.4Z" fill="#2a78c8"/>
<path d="M66 9.5H69M70 9.5H73" stroke="#333" stroke-width="1"/>
<path d="M98.5 4V13.5M110.5 4V13.5M98.5 8.7H104" stroke="#2a78c8" stroke-width="1.8" fill="none"/><path d="M103.5 5.2L108.8 8.7L103.5 12.2Z" fill="#2a78c8"/>
<path d="M115 9.5H118M119 9.5H122" stroke="#333" stroke-width="1"/>
<circle cx="153.2" cy="9.3" r="4.2" fill="none" stroke="#2a78c8" stroke-width="2"/><path d="M150 3H156.5M153.2 3V5.5M153.2 7V9.5H155" stroke="#2a78c8" stroke-width="1.6" fill="none"/><path d="M148 4.5L149.5 3.5" stroke="#2a78c8" stroke-width="1.4"/>
<path d="M164 9.5H167M168 9.5H171" stroke="#333" stroke-width="1"/>
</svg>
<!-- zoom slider -->
<div class="a" style="left:603px;top:682px;width:82px;height:5px;background:#dfe6f5;border:1px solid #98a0b4"></div>
<svg class="a" style="left:682px;top:674px" width="14" height="15" viewBox="0 0 14 15"><path d="M0.5 14.5V6L7 0.8L13.5 6V14.5Z" fill="#fafafa" stroke="#9a9ea6" stroke-width="1"/></svg>
<svg class="a" style="left:702px;top:675px" width="8" height="11"><path d="M7 1V10L1 5.5Z" fill="#6e778c"/></svg>
<div class="a" style="left:718px;top:674px;width:213px;height:13px;background:#8c929f"></div>
<svg class="a" style="left:941px;top:675px" width="8" height="11"><path d="M1 1V10L7 5.5Z" fill="#6e778c"/></svg>
<!-- tl vscroll -->
<svg class="a" style="left:956px;top:561px" width="12" height="8"><path d="M1 7L6 1.5L11 7Z" fill="#6e778c"/></svg>
<div class="a" style="left:955px;top:628px;width:13px;height:23px;background:#8c929f"></div>
<svg class="a" style="left:956px;top:660px" width="12" height="8"><path d="M1 1H11L6 6.5Z" fill="#6e778c"/></svg>


<div id="rp" class="a"></div>
<div class="a" style="left:974px;top:109px;width:1px;height:583px;background:#727479"></div>
<div class="a" style="left:975px;top:109px;width:149px;height:23px;background:#eef0f6;border-bottom:1px solid #5c5e64;border-right:1px solid #7a7c82"></div>
<div class="a" style="left:1124px;top:109px;width:151px;height:23px;background:#d5dae5;border-bottom:1px solid #5c5e64"></div>
<div class="t" style="left:1028px;top:115px;font-size:11.5px;font-weight:bold;color:#111;--w:44px">プロパティ</div>
<div class="t" style="left:1178px;top:115px;font-size:11.5px;font-weight:bold;color:#111;--w:42px">タイミング</div>
<svg class="a" style="left:985px;top:147px" width="22" height="17" viewBox="0 0 22 17"><rect x="1.5" y="1.5" width="19" height="13.5" fill="#fff" stroke="#2a7ac5" stroke-width="2"/><rect x="5.5" y="4.5" width="11" height="7.5" fill="#e5a51c"/><rect x="7" y="10" width="8" height="1" fill="#fff" opacity="0.6"/></svg>
<div class="a" style="left:1017px;top:147px;width:217px;height:21px;background:#fff;border:1px solid #a3a8b4"></div>
<div class="t" style="left:1021px;top:151px;font-size:12.5px;color:#111;--w:60px">コンテンツ 02</div>
<svg class="a" style="left:983px;top:195px" width="13" height="13" viewBox="0 0 13 13"><rect x="0.5" y="0.5" width="12" height="12" fill="#fff" stroke="#7b8190" stroke-width="1"/><path d="M2.5 6.5L5 9.5L10.5 2.5" fill="none" stroke="#222" stroke-width="1.8"/></svg>
<div class="t" style="left:1000px;top:195px;font-size:12.5px;color:#111;--w:186px">メインマスタースライドオブジェクトを表示</div>
<div class="t" style="left:987px;top:225px;font-size:12.5px;color:#111;--w:23px">背景</div>
<div class="a" style="left:987px;top:246px;width:263px;height:23px;background:#f6f7fa;border:1px solid #a3a8b4"></div>
<div class="t" style="left:993px;top:251px;font-size:12.5px;color:#111;--w:108px">マスタースライドの背景</div>
<svg class="a" style="left:1237px;top:254px" width="9" height="6"><path d="M0.5 0.5H8.5L4.5 5.5Z" fill="#6a6f7d"/></svg>
<div class="a" style="left:986px;top:297px;width:261px;height:2px;background:#cdd1d9"></div>
<div class="a" style="left:1042px;top:310px;width:148px;height:22px;background:#f4f5f8;border:1px solid #9ba0ab"></div>
<div class="t" style="left:1063px;top:314px;font-size:12px;color:#111;--w:104px">フィルムストリップビュー</div>

<div id="sb" class="a"></div>
<div class="t" style="left:10px;top:698px;font-size:12.5px;color:#fff;--w:149px">テキストキャプション (292x117)</div>
<div class="a" style="left:1021px;top:695px;width:2px;height:19px;background:#6a6d74"></div>
<div class="a" style="left:1149px;top:695px;width:2px;height:19px;background:#6a6d74"></div>
<div class="t" style="left:1033px;top:698px;font-size:12.5px;color:#fff;--w:99px">マスタースライドビュー</div>
<div class="t" style="left:1155px;top:698px;font-size:12.5px;color:#fff;--w:53px">1280 x 720</div>
<div class="a" style="left:0;top:717px;width:1280px;height:3px;background:linear-gradient(#3a4654,#56667a)"></div>
<div class="a" style="left:364px;top:718px;width:42px;height:2px;background:#c4c8cc"></div>
<div class="a" style="left:502px;top:718px;width:42px;height:2px;background:#f4f4f4"></div>

<div class="a" style="left:5px;top:109px;width:1270px;height:1px;background:#6c6e73"></div>
<div class="a" style="left:0;top:0;width:1px;height:717px;background:#6b6e75"></div>
<script>
document.querySelectorAll('.t').forEach(function(e){var w=parseFloat(getComputedStyle(e).getPropertyValue('--w'));if(!w)return;var r=e.getBoundingClientRect().width;if(r>0){e.style.transformOrigin='0 0';e.style.transform='scaleX('+(w/r)+')';}});
</script>
</body></html>
